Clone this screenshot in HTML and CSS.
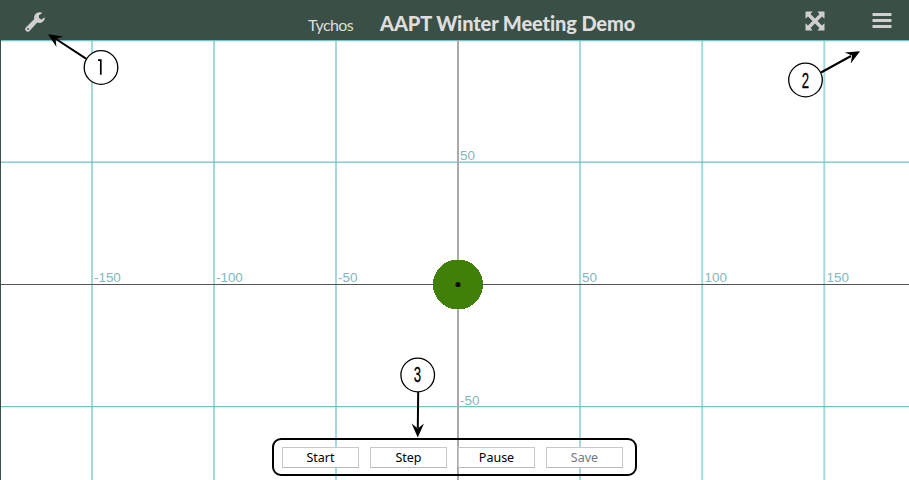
FILE: index.html
```html
<!DOCTYPE html>
<html lang="en">
<head>
<meta charset="utf-8">
<title>Tychos</title>
<link rel="stylesheet" href="styles.css">
</head>
<body>
<div class="app">
  <header class="bar">
    <svg class="icon wrench" viewBox="0 0 22 22"><path class="fill" fill-rule="evenodd" d="M1.6 16.7 10.3 8.1C9.4 4.5 11.9 1.3 15.5 1.2 16.7 1.1 17.7 1.4 18.4 1.9L14.9 4.3 15 7 17.4 8.5 20.9 6.3C21.1 9.5 18.3 12 15.3 12.1 14.4 12.1 13.7 11.9 13.3 11.6L5 20.4Q3.7 21.3 2.4 20.3L1.3 19.1Q.5 17.9 1.6 16.7ZM3.1 17.9a.9.9 0 1 0 1.8 0a.9.9 0 1 0-1.8 0Z"/></svg>
    <div class="titles"><span class="brand">Tychos</span><h1 class="title">AAPT Winter Meeting Demo</h1></div>
    <div class="tools">
      <svg class="icon expand" viewBox="0 0 20 20"><path class="fill" d="M1 .5H7.7L5.5 3 10 7.5 14.5 3 12.3.5H19.5V7.7L17 5.5 12.5 10 17 14.5 19.5 12.3V19.5H12.3L14.5 17 10 12.5 5.5 17 7.7 19.5H.5V12.3L3 14.5 7.5 10 3 5.5.5 7.7V1Z"/></svg>
      <svg class="icon menu" viewBox="0 0 20 18"><path class="fill" d="M.5 1h19v3H.5zM.5 7h19v3H.5zM.5 13h19v3H.5z"/></svg>
    </div>
  </header>
  <main class="stage">
    <svg class="plot" viewBox="0 40 909 440">
      <path class="grid-v" d="M92 40V480M214 40V480M336 40V480M580 40V480M702.2 40V480M824.3 40V480"/>
      <path class="grid-h" d="M0 40.5H909M0 162.2H909M0 406.7H909"/>
      <path class="axis-y" d="M458 40V480"/>
      <path class="axis-x" d="M0 284.5H909"/>
      <path class="edge" d="M.5 40V480"/>
      <g class="ticks">
        <text x="94" y="282">-150</text><text x="216" y="282">-100</text><text x="338" y="282">-50</text>
        <text x="582" y="282">50</text><text x="704.5" y="282">100</text><text x="826.5" y="282">150</text>
        <text x="460" y="160">50</text><text x="460" y="405">-50</text>
      </g>
      <circle class="ball" cx="458" cy="284.5" r="25"/>
      <circle class="center" cx="458" cy="284.5" r="2.6"/>
    </svg>
    <div class="controls">
      <button class="btn">Start</button><button class="btn">Step</button><button class="btn">Pause</button><button class="btn" disabled>Save</button>
    </div>
  </main>
  <svg class="notes" viewBox="0 0 909 480">
    <defs><path id="head" d="M0 0-14 6.2-9 0-14-6.2Z"/></defs>
    <path class="arrow" d="M86 58.7 56 39M821 72.5 851 56M418.2 392 417.8 428"/>
    <use href="#head" transform="translate(48 34.2) rotate(212.5)"/>
    <use href="#head" transform="translate(860 51.2) rotate(-29)"/>
    <use href="#head" transform="translate(417.8 437.5) rotate(90)"/>
    <g class="ring"><circle cx="101" cy="67.5" r="16.8"/><circle cx="805.5" cy="80" r="16.8"/><circle cx="417.7" cy="375" r="16.8"/></g>
    <path class="one" d="M98 60.1H100.8V74.7"/>
    <g class="num">
      <text transform="translate(805.3 87.5) scale(.6 1)">2</text>
      <text transform="translate(417.4 382.3) scale(.6 1)">3</text>
    </g>
  </svg>
</div>
</body>
</html>
```
FILE: styles.css
```css
body { margin: 0; }
.app { position: relative; width: 909px; height: 480px; overflow: hidden; background: #fff; display: flex; flex-direction: column; }
.bar { height: 40px; flex: none; box-sizing: border-box; padding: 0 17px 0 24px; background: #3a4f45; color: #dedede; display: flex; font-family: Lato, sans-serif; }
.icon { display: block; flex: none; }
.fill { fill: #cfcfcf; }
.wrench { width: 22px; height: 22px; margin-top: 11px; }
.titles { display: flex; align-items: baseline; height: 40px; margin-left: 262px; white-space: nowrap; }
.brand { width: 72px; font-size: 16px; line-height: 50px; font-weight: 400; letter-spacing: -.6px; }
.title { margin: 0; font-size: 20px; line-height: 46px; font-weight: 900; letter-spacing: -.12px; }
.tools { display: flex; gap: 47px; margin-left: auto; }
.expand { width: 20px; height: 20px; margin-top: 11px; }
.menu { width: 20px; height: 18px; margin-top: 12px; }
.stage { flex: 1; display: grid; min-height: 0; }
.plot { grid-area: 1 / 1; width: 909px; height: 440px; display: block; }
.grid-v { stroke: #a5dadb; stroke-width: 2; fill: none; }
.grid-h { stroke: #72c2c5; stroke-width: 1.3; fill: none; }
.axis-y { stroke: #aaa; stroke-width: 2; }
.axis-x { stroke: #555; stroke-width: 1; }
.edge { stroke: #3a4f45; stroke-width: 1; }
.ticks { font: 13.4px "Liberation Sans", sans-serif; fill: #7fb9be; }
.ball { fill: #408008; shape-rendering: crispEdges; }
.center { fill: #111; }
.controls { grid-area: 1 / 1; align-self: end; margin: 0 0 4px 272px; width: 365px; height: 38px; box-sizing: border-box; border: 2px solid #000; border-radius: 9px; display: flex; gap: 11px; padding: 7px 8px 0; z-index: 1; }
.btn { width: 77px; height: 21px; flex: none; box-sizing: border-box; padding: 0; margin: 0; border: 1px solid #c7c9c9; border-bottom-color: #b5b8b8; border-radius: 0; background: #fff; color: #000; font: 12.5px/19px "Noto Sans", sans-serif; }
.btn:disabled { color: #777; }
.notes { position: absolute; inset: 0; width: 909px; height: 480px; z-index: 2; pointer-events: none; }
.arrow { stroke: #000; stroke-width: 2; fill: none; }
.ring { fill: #fff; stroke: #000; stroke-width: 1.3; }
.one { fill: none; stroke: #000; stroke-width: 1.7; }
.num { font: 22px "Liberation Sans", sans-serif; text-anchor: middle; stroke: #000; stroke-width: .3; }
```
